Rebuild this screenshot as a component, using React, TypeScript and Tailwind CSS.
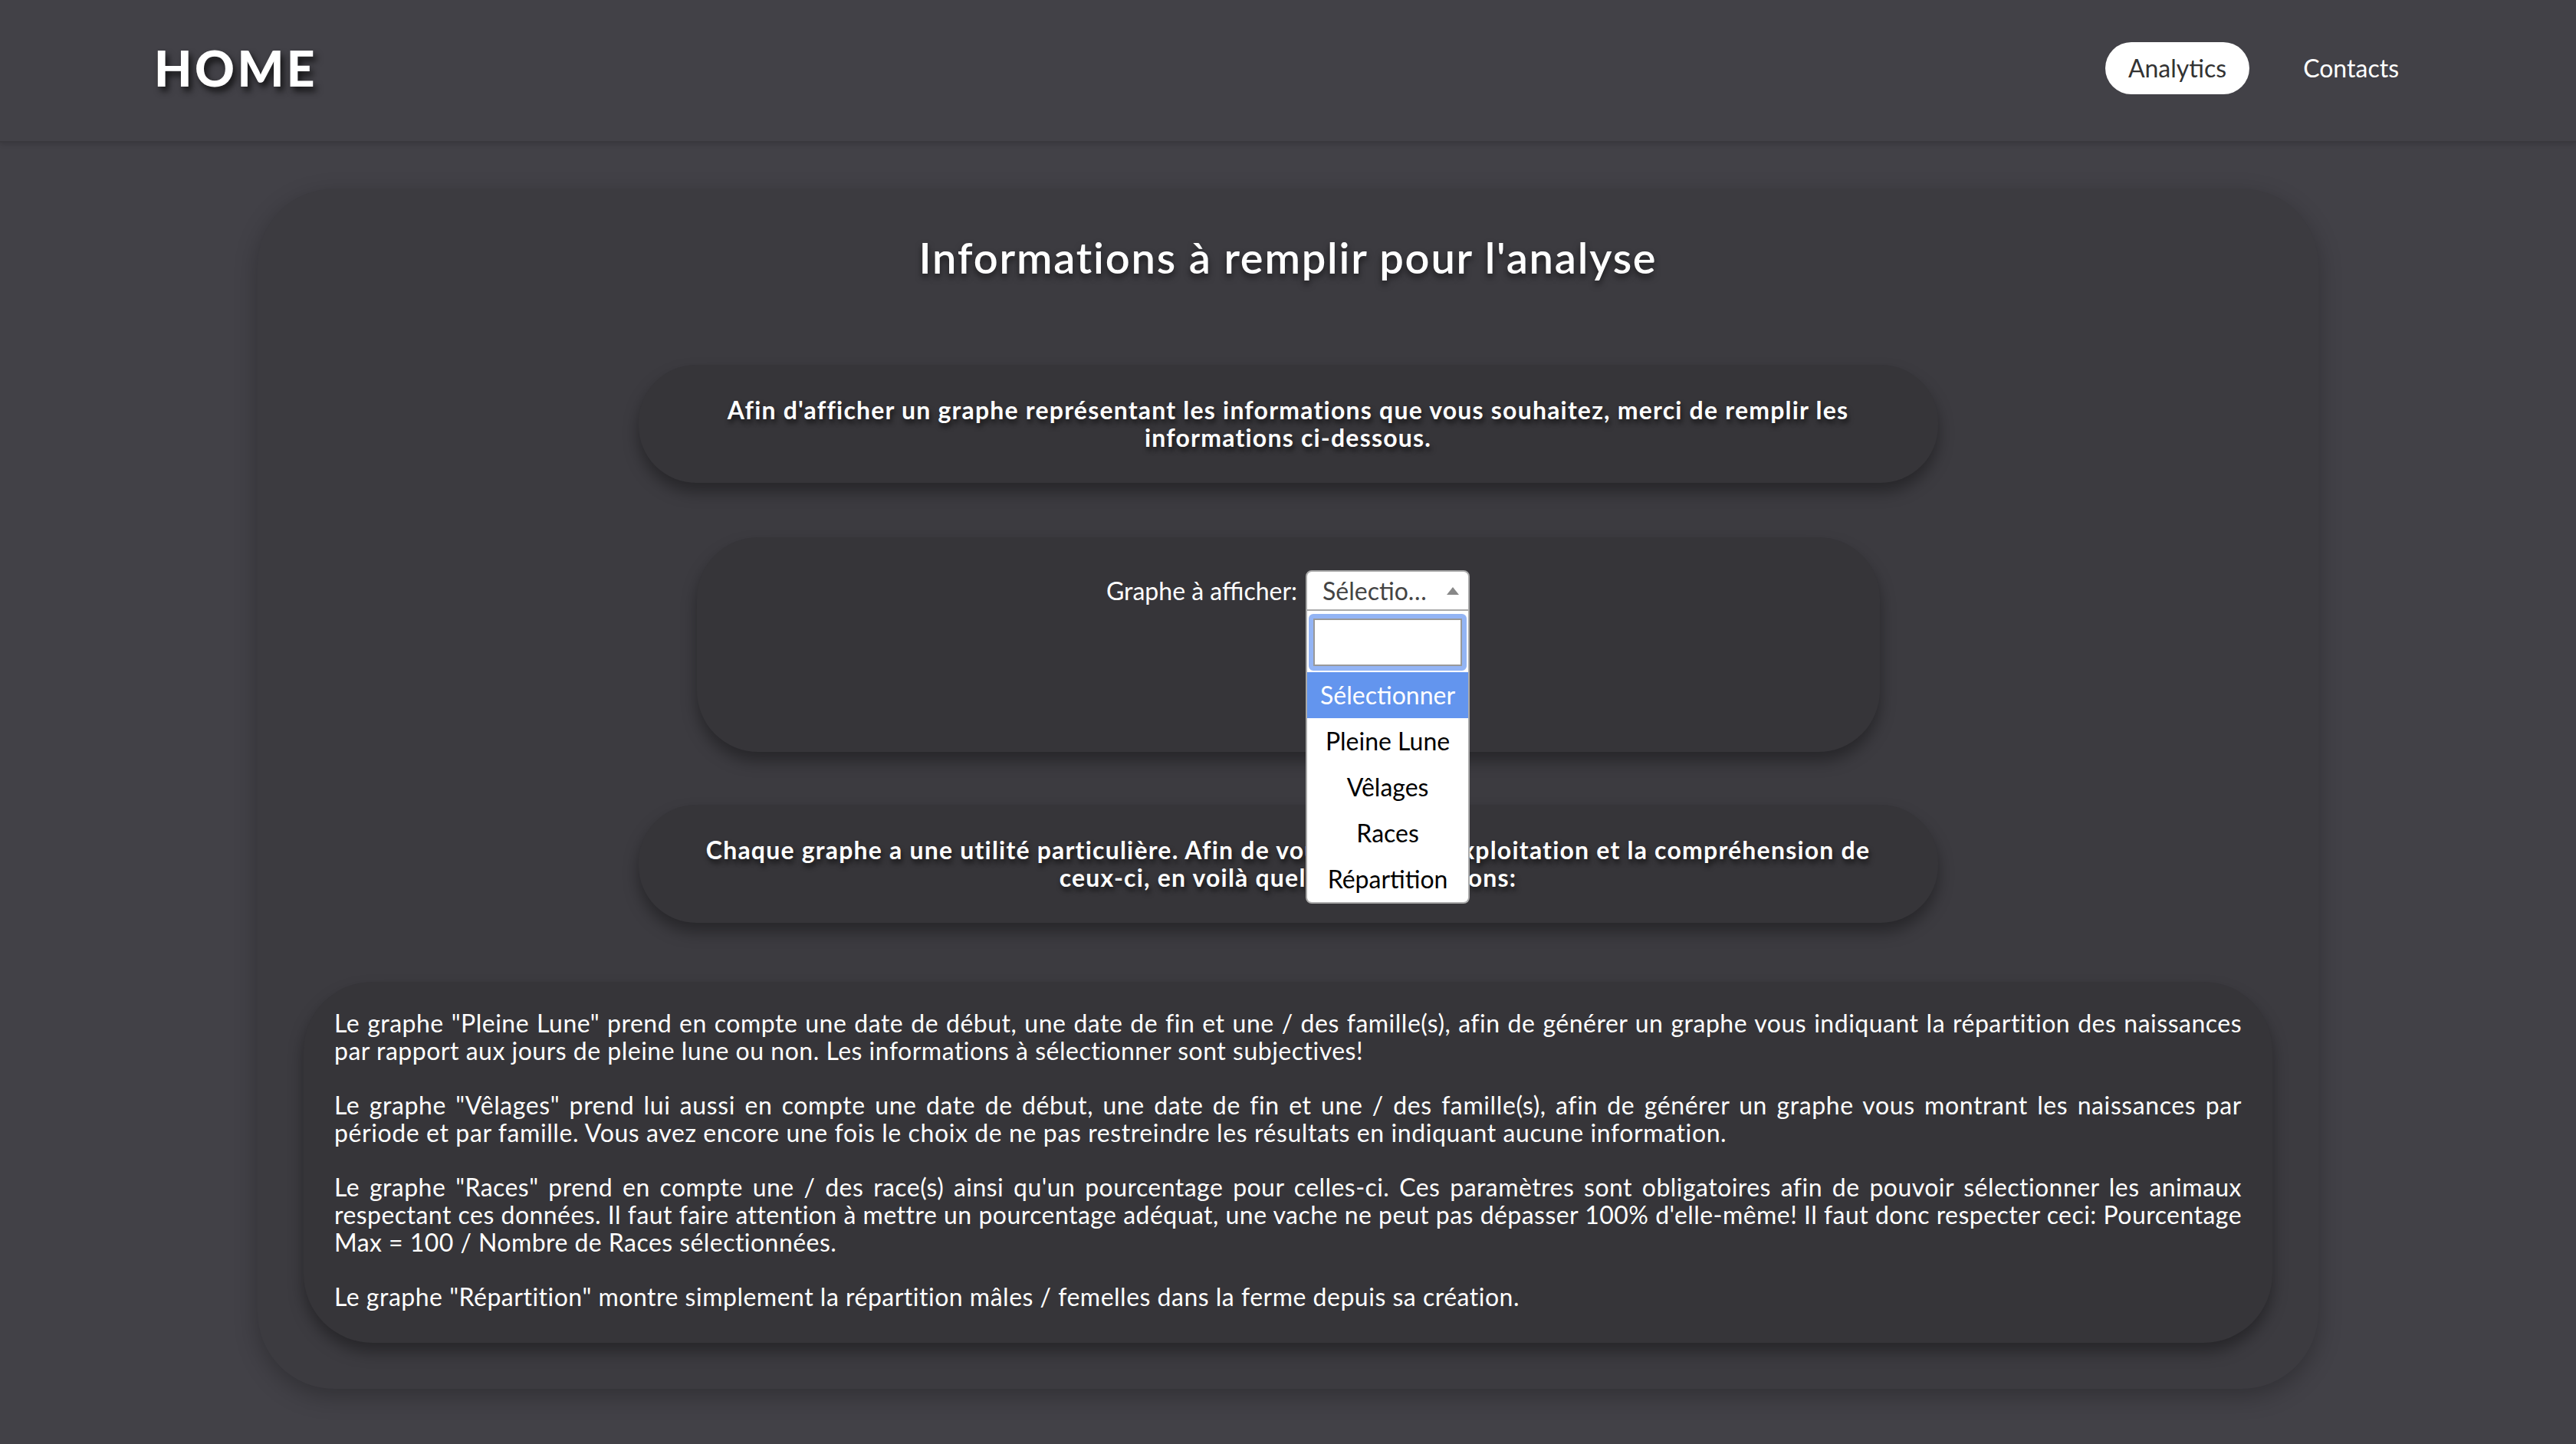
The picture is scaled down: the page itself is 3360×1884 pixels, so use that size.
const paragraphs = [
  {
    text: "Le graphe \"Pleine Lune\" prend en compte une date de début, une date de fin et une / des famille(s), afin de générer un graphe vous indiquant la répartition des naissances par rapport aux jours de pleine lune ou non. Les informations à sélectionner sont subjectives!",
    cls: "tracking-[0.5px]",
  },
  {
    text: "Le graphe \"Vêlages\" prend lui aussi en compte une date de début, une date de fin et une / des famille(s), afin de générer un graphe vous montrant les naissances par période et par famille. Vous avez encore une fois le choix de ne pas restreindre les résultats en indiquant aucune information.",
    cls: "tracking-[0.6px]",
  },
  {
    text: "Le graphe \"Races\" prend en compte une / des race(s) ainsi qu'un pourcentage pour celles-ci. Ces paramètres sont obligatoires afin de pouvoir sélectionner les animaux respectant ces données. Il faut faire attention à mettre un pourcentage adéquat, une vache ne peut pas dépasser 100% d'elle-même! Il faut donc respecter ceci: Pourcentage Max = 100 / Nombre de Races sélectionnées.",
    cls: "tracking-[0.45px]",
  },
  {
    text: "Le graphe \"Répartition\" montre simplement la répartition mâles / femelles dans la ferme depuis sa création.",
    cls: "tracking-[0.5px]",
  },
];

const options = ["Sélectionner", "Pleine Lune", "Vêlages", "Races", "Répartition"];

function GraphSelect() {
  return (
    <div className="relative w-[214px]">
      <div className="flex h-[53px] items-center rounded-t-[8px] border-2 border-[#aaa] bg-white pl-[20px] pr-[12px]">
        <span className="flex-1 truncate text-[32px] leading-[40px] text-[#444]">Sélectionner</span>
        <span className="ml-[10px] h-0 w-0 border-x-[8px] border-b-[10px] border-x-transparent border-b-[#888]" />
      </div>
      <div className="absolute left-0 top-full z-50 w-full rounded-b-[8px] border-2 border-t-0 border-[#aaa] bg-white">
        <div className="px-[2px] pt-[4px] pb-[2px]">
          <div className="rounded-[6px] border-[6px] border-[#93b4f4]">
            <div className="h-[62px] border-2 border-[#999] bg-white" />
          </div>
        </div>
        {options.map((o, i) => (
          <div
            key={o}
            className={
              i === 0
                ? "flex h-[60px] items-center justify-center bg-[#6395ee] text-[32px] text-white"
                : "flex h-[60px] items-center justify-center text-[32px] text-black"
            }
          >
            {o}
          </div>
        ))}
      </div>
    </div>
  );
}

export default function App() {
  return (
    <div className="min-h-screen bg-[#424147] font-['Lato',sans-serif] text-white">
      <header className="flex h-[186px] items-center justify-between border-b-2 border-[#3a393e] px-[201px] pb-[6px] shadow-[0_2px_6px_rgba(0,0,0,0.15)]">
        <div className="text-[64px] font-black leading-none tracking-[3.5px] [text-shadow:4px_6px_8px_rgba(0,0,0,0.7)]">
          HOME
        </div>
        <nav className="flex items-center gap-[40px] text-[32px]">
          <a className="rounded-full bg-white px-[30px] py-[14px] leading-[40px] text-[#333]">Analytics</a>
          <a className="px-[30px] py-[14px] leading-[40px] text-white">Contacts</a>
        </nav>
      </header>

      <main className="pt-[60px] pb-[71px]">
        <div className="mx-auto flex w-[2688px] flex-col items-center rounded-[100px] bg-[#3c3b40] pt-[56px] pb-[60px] shadow-[0_10px_30px_rgba(0,0,0,0.25)]">
          <h1 className="text-[56px] font-semibold leading-[67px] tracking-[1.8px] [text-shadow:0_5px_8px_rgba(0,0,0,0.55)]">
            Informations à remplir pour l'analyse
          </h1>

          <div className="mt-[107px] w-[1695px] rounded-[75px] bg-[#363539] px-[60px] py-[41px] text-center text-[32px] font-bold leading-[36px] tracking-[1.2px] shadow-[0_12px_20px_rgba(0,0,0,0.35)] [text-shadow:2px_5px_6px_rgba(0,0,0,0.6)]">
            Afin d'afficher un graphe représentant les informations que vous souhaitez, merci de remplir les informations ci-dessous.
          </div>

          <div className="relative z-10 mt-[71px] flex h-[280px] w-[1543px] justify-center rounded-[80px] bg-[#363539] pt-[43px] shadow-[0_12px_20px_rgba(0,0,0,0.35)]">
            <div className="flex h-[53px] items-center gap-[11px]">
              <span className="text-[32px] leading-[40px]">Graphe à afficher:</span>
              <GraphSelect />
            </div>
          </div>

          <div className="mt-[69px] w-[1695px] rounded-[75px] bg-[#363539] px-[60px] py-[41px] text-center text-[32px] font-bold leading-[36px] tracking-[1.2px] shadow-[0_12px_20px_rgba(0,0,0,0.35)] [text-shadow:2px_5px_6px_rgba(0,0,0,0.6)]">
            Chaque graphe a une utilité particulière. Afin de vous faciliter l'exploitation et la compréhension de ceux-ci, en voilà quelques explications:
          </div>

          <div className="mt-[77px] flex w-[2568px] flex-col gap-[35px] rounded-[90px] bg-[#363539] px-[40px] pt-[36px] pb-[42px] text-justify text-[32px] leading-[36px] shadow-[0_12px_20px_rgba(0,0,0,0.35)]">
            {paragraphs.map((p) => (
              <p key={p.text} className={p.cls}>
                {p.text}
              </p>
            ))}
          </div>
        </div>
      </main>
    </div>
  );
}
